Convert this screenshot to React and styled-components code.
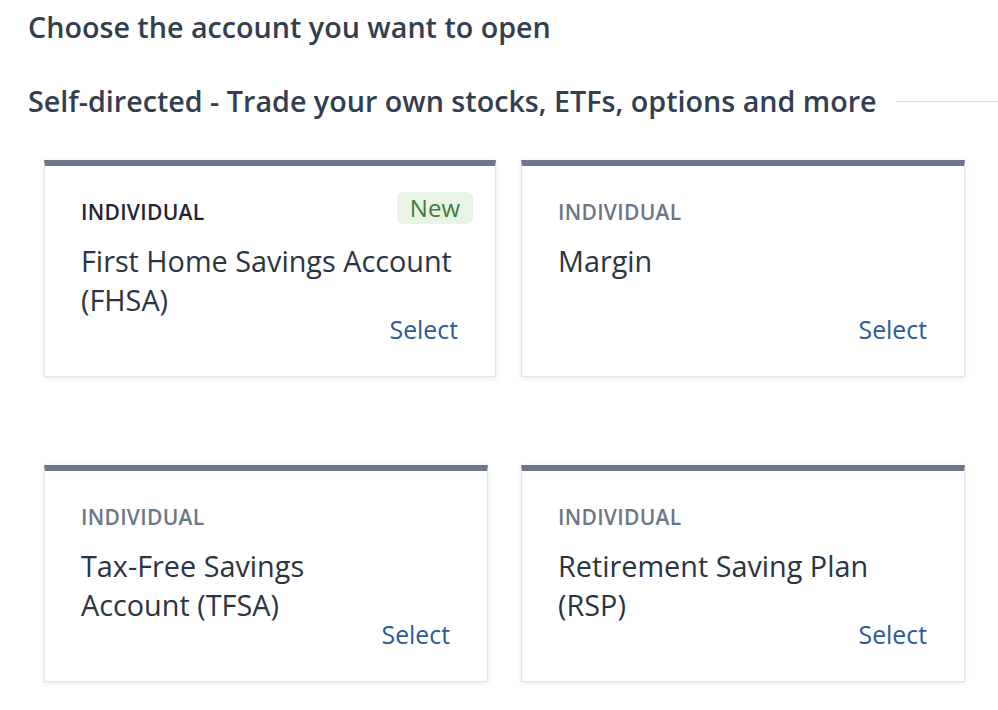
import React from 'react'
import styled, { createGlobalStyle } from 'styled-components'

const GlobalStyle = createGlobalStyle`
  body {
    margin: 0;
    background: #ffffff;
    font-family: "Open Sans", "Noto Sans", sans-serif;
  }
`;

const Page = styled.div`
  padding: 9px 0 40px 28px;
  color: #343e4e;
`;

const Heading = styled.h1`
  margin: 0;
  font-size: 28.7px;
  line-height: 36px;
  font-weight: 600;
  color: #343e4e;
`;

const SectionRow = styled.div`
  display: flex;
  align-items: center;
  gap: 19px;
  margin-top: 38px;
`;

const SectionTitle = styled.h2`
  margin: 0;
  font-size: 28.7px;
  line-height: 36px;
  font-weight: 600;
  color: #343e4e;
  white-space: nowrap;
`;

const Rule = styled.div`
  flex: 1;
  height: 1px;
  background: #dedede;
`;

const Grid = styled.div`
  display: grid;
  grid-template-columns: 444px 444px;
  column-gap: 33px;
  row-gap: 88px;
  margin: 41px 0 0 16px;
`;

const Card = styled.div`
  position: relative;
  display: flex;
  flex-direction: column;
  background: #fff;
  border: 1px solid #e4e4e4;
  border-top: 6px solid #6b7789;
  box-shadow: 0 1px 5px rgba(0, 0, 0, 0.1);
  padding: 34px 37px 37px 36px;
  margin-right: ${({ $wide }) => ($wide ? '-8px' : '0')};
`;

const Label = styled.div`
  font-size: 21px;
  line-height: 24px;
  font-weight: 600;
  letter-spacing: 0.3px;
  color: ${({ $dark }) => ($dark ? '#1f2631' : '#6b7789')};
`;

const Title = styled.div`
  margin-top: 17px;
  min-height: 78px;
  font-size: 28.8px;
  line-height: 39px;
  font-weight: 400;
  color: #2b3442;
`;

const Select = styled.a`
  align-self: flex-end;
  font-size: 24.8px;
  line-height: 20px;
  color: #2d5b94;
  text-decoration: none;
  cursor: pointer;
`;

const Badge = styled.span`
  position: absolute;
  top: 26px;
  right: 22px;
  padding: 0 13px;
  height: 32px;
  line-height: 32px;
  border-radius: 6px;
  background: #e9f3e6;
  color: #3d7d36;
  font-size: 24px;
`;

const accounts = [
  { lines: ['First Home Savings Account', '(FHSA)'], isNew: true },
  { lines: ['Margin'] },
  { lines: ['Tax-Free Savings', 'Account (TFSA)'] },
  { lines: ['Retirement Saving Plan', '(RSP)'] },
];

const App = () => {
  return (
    <Page>
      <GlobalStyle />
      <Heading>Choose the account you want to open</Heading>
      <SectionRow>
        <SectionTitle>Self-directed - Trade your own stocks, ETFs, options and more</SectionTitle>
        <Rule />
      </SectionRow>
      <Grid>
        {accounts.map((a) => (
          <Card key={a.lines[0]} $wide={a.isNew}>
            {a.isNew && <Badge>New</Badge>}
            <Label $dark={a.isNew}>INDIVIDUAL</Label>
            <Title>
              {a.lines.map((l, i) => (
                <React.Fragment key={l}>
                  {i > 0 && <br />}
                  {l}
                </React.Fragment>
              ))}
            </Title>
            <Select>Select</Select>
          </Card>
        ))}
      </Grid>
    </Page>
  )
}

export default App
